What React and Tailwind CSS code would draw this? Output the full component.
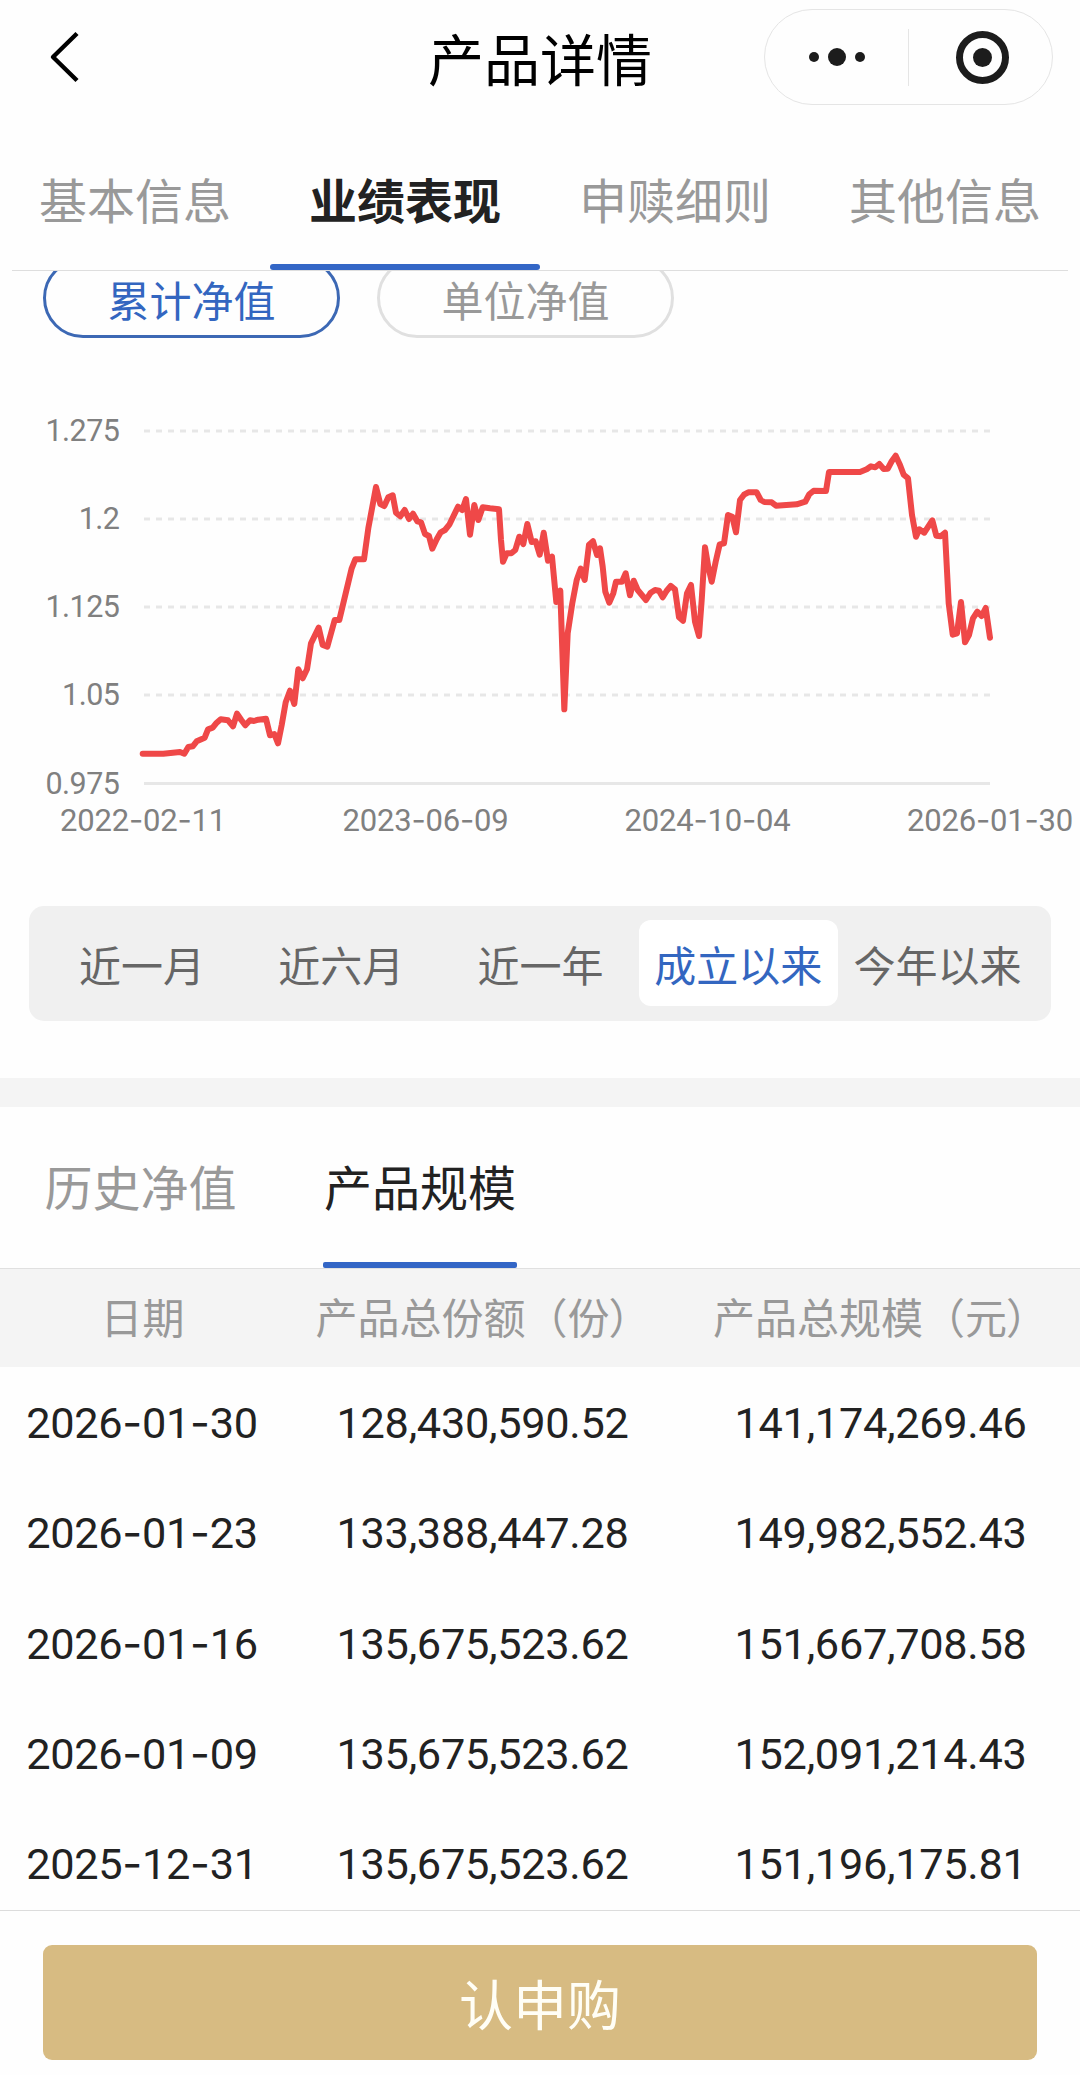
import { Fragment } from "react";

const CJK = "font-['Noto_Sans_CJK_SC',sans-serif]";

const tabs = ["基本信息", "业绩表现", "申赎细则", "其他信息"];
const ranges = ["近一月", "近六月", "近一年", "成立以来", "今年以来"];

const rows = [
  ["2026-01-30", "128,430,590.52", "141,174,269.46"],
  ["2026-01-23", "133,388,447.28", "149,982,552.43"],
  ["2026-01-16", "135,675,523.62", "151,667,708.58"],
  ["2026-01-09", "135,675,523.62", "152,091,214.43"],
  ["2025-12-31", "135,675,523.62", "151,196,175.81"],
];

const yTicks = [
  ["1.275", 431],
  ["1.2", 519],
  ["1.125", 607],
  ["1.05", 695],
  ["0.975", 783.5],
];

const xTicks = [
  ["2022-02-11", 143],
  ["2023-06-09", 425.5],
  ["2024-10-04", 707.5],
  ["2026-01-30", 990],
];

const line =
  "142.7,753.7 163.3,753.7 180,752 184.3,753.7 188.3,747 192.7,746.3 196.7,741.3 204.7,737.7 208,729.3 212.7,727.7 216.7,722.7 220.7,719.3 228,720.3 233,726.3 237,713.7 241.3,720 245.3,725.3 250,720.3 254,721 258.3,719.7 266,718.7 270,735.3 274.3,734 278,743.3 281.7,725 285.7,702.3 290,690.7 294.3,704 298.3,669.3 302.7,678.3 307,669.3 311,643.3 318.7,627.7 322.7,645 327.3,646.7 334.7,620 339.3,620 351.7,568.3 355.3,559.3 364,559.3 368.3,528.3 376,487 380.3,504 384.3,506 388.3,497.3 392.7,495.3 396,512.7 400.3,516.3 404.7,510 409,519 413,513.7 417.3,521.3 421,522.3 425,534 429,536 432.3,548.7 436.7,539.3 440.7,532.3 445,530 449.3,524.7 458,506.7 462.3,510 466,499 470,534.7 474.3,505 478.3,520 482.7,507.3 490,508.3 499,509.3 501,540 503,561.7 506.7,553.3 511.3,553.3 515.3,550 519.3,536.7 523.3,544 527.3,524 531.7,542 535.7,541.3 539.7,554.7 543.7,532.7 548,560.7 552,556.7 556.3,602 560.3,590.7 564.3,709.3 567.7,633.3 572.3,603.3 576.7,580 580.7,568.7 584.7,580 589,544.7 593,541.3 597,555 600,548.3 602.7,566.7 605.3,591.7 609.3,602.7 613.3,593.3 616,581.7 622,581.7 625.7,573.3 630,595.3 633.7,580.7 637.7,590 646,600 650.7,592.7 655,590 659,590.7 662.7,597.3 666.7,590.7 670.7,586 675,589.3 679,617.3 683,620.7 687,593.3 691,585 695,621.7 699,636 701.7,600 705,547.3 708.3,566.7 711.7,581.7 715.7,561.7 719.7,544.3 724,543.3 728,515 732.3,516.7 736,532.3 740,500 744,494.7 748.3,492.3 756.7,492.3 760.7,500 764.3,502 771.7,502.3 776,505.7 796.7,504.3 805.3,501.7 809.3,494.3 813.7,490.7 826,491 829,472 860,472 866.7,469.3 871,466.3 875.3,467.3 879.3,464 883.7,469 887.7,468.7 891.7,461.3 895.7,455.7 900,465 903.7,474.7 908,478.3 912,515 916,536.7 919.3,529.3 924.3,532.7 932.3,520.3 936.3,535.7 940.7,536.3 945,532.7 948.7,603.3 952.7,634.7 957,633.3 961,602 965,642.3 969,635 973,618.3 977.3,611.7 981.7,616 985.7,608 990,637.7";

function DateText({ value }) {
  return value.split("-").map((part, i) => (
    <Fragment key={i}>
      {i > 0 && <span className="font-['Inter',sans-serif]">-</span>}
      {part}
    </Fragment>
  ));
}

function Header() {
  return (
    <header className="relative flex h-[114px] shrink-0 items-center justify-center">
      <svg className="absolute left-[48px] top-[29px] h-14 w-8" viewBox="0 0 32 56" fill="none" stroke="#000" strokeWidth="4.4">
        <path d="M29 4.5 5 28l24 23.5" strokeLinejoin="round" />
      </svg>
      <h1 className="pb-px text-[56px] leading-none text-black">产品详情</h1>
      <div className="absolute right-[27px] top-[9px] flex h-24 w-[289px] items-center rounded-full border border-[#e5e5e5]">
        <div className="flex w-[143px] items-center justify-center gap-[9px]">
          <i className="size-[10px] rounded-full bg-[#1c1c1c]" />
          <i className="size-[18px] rounded-full bg-[#1c1c1c]" />
          <i className="size-[10px] rounded-full bg-[#1c1c1c]" />
        </div>
        <div className="h-[57px] w-px bg-[#e5e5e5]" />
        <div className="flex flex-1 items-center justify-center pl-[3px]">
          <div className="flex size-[53px] items-center justify-center rounded-full border-[7px] border-[#1c1c1c]">
            <i className="size-[19px] rounded-full bg-[#1c1c1c]" />
          </div>
        </div>
      </div>
    </header>
  );
}

function Chart() {
  return (
    <svg className="block h-[530px] w-full shrink-0" viewBox="0 338 1080 530">
      {yTicks.map(([label, y], i) => (
        <g key={label}>
          <line x1="144" x2="990" y1={y} y2={y} stroke="#e7e7e7" strokeWidth="3" strokeDasharray={i < 4 ? "6 6" : undefined} />
          <text x="119.5" y={y + 10} textAnchor="end" className="fill-[#808080] font-['Roboto',sans-serif] text-[30.5px] tracking-[-0.5px]">
            {label}
          </text>
        </g>
      ))}
      {xTicks.map(([label, x]) => (
        <text key={label} x={x} y="831" textAnchor="middle" className="fill-[#808080] font-['Roboto',sans-serif] text-[31px] tracking-[-0.2px]">
          {label.split("-").map((part, i) => (
            <Fragment key={i}>
              {i > 0 && <tspan className="font-['Inter',sans-serif]">-</tspan>}
              {part}
            </Fragment>
          ))}
        </text>
      ))}
      <polyline points={line} fill="none" stroke="#ef4848" strokeWidth="6" strokeLinejoin="round" strokeLinecap="round" />
    </svg>
  );
}

export default function App() {
  return (
    <div className={`flex h-[2075px] w-[1080px] flex-col overflow-hidden bg-[#fefefe] text-[#222] ${CJK}`}>
      <Header />

      <nav className="mx-3 h-[157px] shrink-0 border-b border-[#dedede]">
        <div className="-mx-3 grid h-[156px] grid-cols-4">
          {tabs.map((t, i) => (
            <div
              key={t}
              className={`relative flex items-center justify-center pt-[12px] text-[48px] leading-none ${i === 1 ? "font-bold text-[#222]" : "text-[#999]"}`}
            >
              {t}
              {i === 1 && <span className="absolute inset-x-0 bottom-0 h-1.5 rounded-full bg-[#3366c6]" />}
            </div>
          ))}
        </div>
      </nav>

      <div className="flex h-[67px] shrink-0 items-end gap-[37px] overflow-hidden px-[43px]">
        <div className="flex h-20 w-[297px] shrink-0 items-center justify-center rounded-full border-[3px] border-[#3c68b4] pt-0.5 text-[42px] leading-none text-[#3366c0]">
          累计净值
        </div>
        <div className="flex h-20 w-[297px] shrink-0 items-center justify-center rounded-full border-[3px] border-[#e0e0e0] pt-0.5 text-[42px] leading-none text-[#999]">
          单位净值
        </div>
      </div>

      <Chart />

      <div className="mx-[29px] mt-[38px] grid h-[115px] shrink-0 grid-cols-5 rounded-[15px] bg-[#f0f0f0] pb-[15px] pl-3 pr-[14px] pt-[14px]">
        {ranges.map((r, i) => (
          <div
            key={r}
            className={`flex items-center justify-center whitespace-nowrap rounded-xl pt-px text-[42px] leading-none ${i === 3 ? "bg-white text-[#3366c0]" : "text-[#666]"} ${i < 3 ? "pl-[3px]" : ""}`}
          >
            {r}
          </div>
        ))}
      </div>

      <div className="mt-[57px] h-[29px] shrink-0 bg-[#f4f4f4]" />

      <div className="flex h-[161px] shrink-0 gap-[86px] pl-[44px] text-[48px] leading-none">
        <div className="flex w-[193px] items-center justify-center pb-[5px] text-[#999]">历史净值</div>
        <div className="relative flex w-[194px] items-center justify-center pb-[5px] text-[#222]">
          产品规模
          <span className="absolute inset-x-0 bottom-0 h-1.5 rounded-[2px] bg-[#3366c6]" />
        </div>
      </div>

      <div className="grid h-[99px] shrink-0 grid-cols-[285px_397px_398px] items-center border-t border-[#e0e0e0] bg-[#f4f4f4] pb-[5px] text-center text-[42px] leading-none text-[#999]">
        <div>日期</div>
        <div className="whitespace-nowrap">
          产品总份额（份<span className="relative -left-px">）</span>
        </div>
        <div className="whitespace-nowrap">
          产品总规模（元<span className="relative -left-px">）</span>
        </div>
      </div>

      <div className="h-[543px] shrink-0 overflow-hidden font-['Roboto',sans-serif] text-[43.3px] leading-none tracking-[-0.3px] text-[#222]">
        {rows.map(([date, shares, total]) => (
          <div key={date} className="grid h-[110.3px] grid-cols-[284px_397px_399px] items-baseline pt-[34px] text-center">
            <div>
              <DateText value={date} />
            </div>
            <div>{shares}</div>
            <div>{total}</div>
          </div>
        ))}
      </div>

      <footer className="flex-1 border-t border-[#dcdcdc] px-[43px] pt-[34px]">
        <button className="flex h-[115px] w-full items-center justify-center rounded-[9px] bg-[#d7bb82] pt-px text-[54px] leading-none text-[#fffef6]">
          认申购
        </button>
      </footer>
    </div>
  );
}
